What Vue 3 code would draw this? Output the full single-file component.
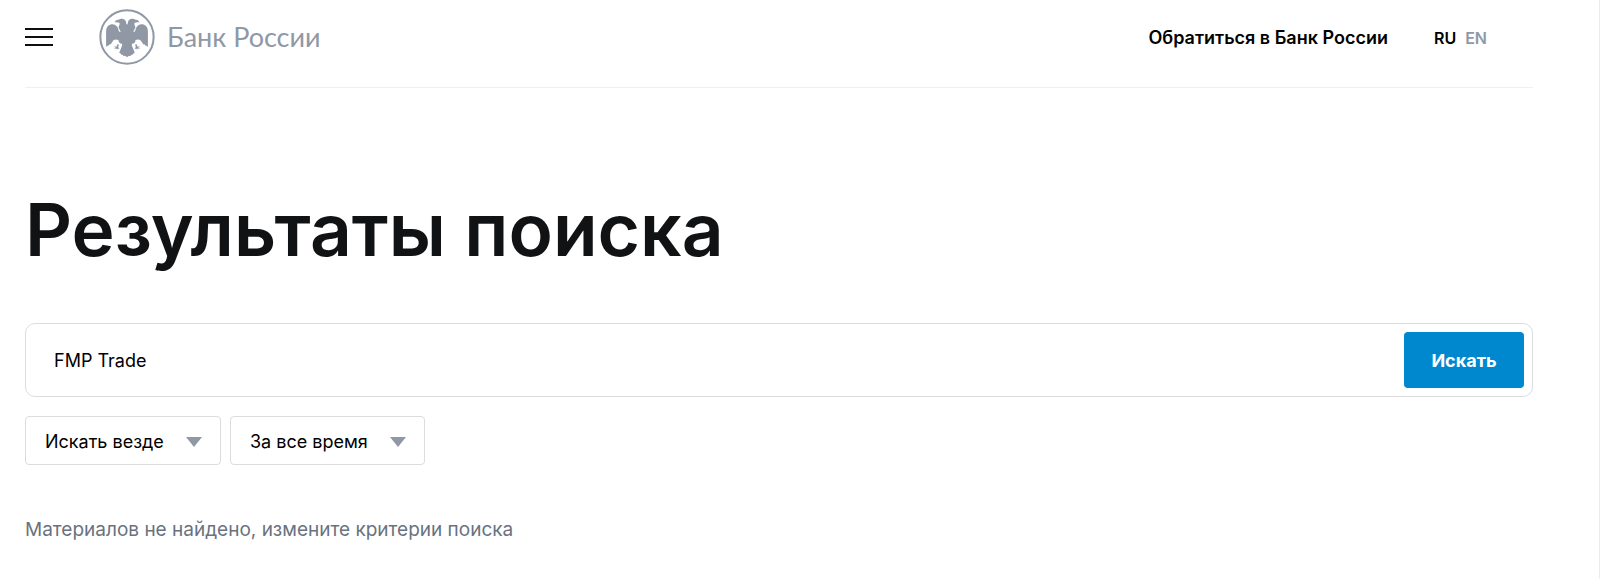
<template>
  <div class="page">
    <header class="header">
      <button class="menu-btn" type="button" aria-label="Меню">
        <span></span><span></span><span></span>
      </button>
      <a class="logo" href="#">
        <svg class="logo-mark" viewBox="0 0 166 166" aria-hidden="true">
          <circle cx="83" cy="83" r="79" fill="none" stroke="currentColor" stroke-width="6" />
          <g id="eagle-half" fill="currentColor">
            <path d="M84 48 L81 44 C81 34 75 29 67 29 C62 29 60 31 57 32 C51 32 48 35 47 40 C52 38 56 39 60 41 C63 44 60 48 58 54 C60 60 63 63 64 68 C57 69 59 60 55 54 C50 46 42 43 34 46 C25 49 21 57 21 66 L21 112 C24 111 25 107 29 108 C31 103 34 106 36 103 C38 99 40 97 44 92 C49 89 54 90 58 92 C57 98 61 103 68 103 C70 107 67 112 65 117 L60 130 C63 133 65 131 67 136 C70 134 71 137 74 140 C77 136 79 140 84 143 Z" />
            <path d="M55 104 L59 106 L57 113 L61 119 L56 117 L53 121 L52 117 L44 118 L50 114 L42 112 L52 111 Z" />
          </g>
          <use href="#eagle-half" transform="matrix(-1 0 0 1 166 0)" />
        </svg>
        <span class="logo-text">Банк России</span>
      </a>
      <a class="contact" href="#">Обратиться в Банк России</a>
      <nav class="langs" aria-label="Язык">
        <a v-for="l in langs" :key="l" href="#" :class="['lang', l === lang ? 'on' : '']" @click.prevent="lang = l">{{ l }}</a>
      </nav>
    </header>

    <main>
      <h1 class="title">Результаты поиска</h1>

      <form @submit.prevent>
        <div class="search">
          <input v-model="query" class="search-input" type="text" aria-label="Поисковый запрос" />
          <button class="search-btn" type="submit">Искать</button>
        </div>
        <div class="filters">
          <div v-for="f in filters" :key="f.label" class="filter">
            <select v-model="f.value" :aria-label="f.label">
              <option v-for="o in f.options" :key="o">{{ o }}</option>
            </select>
            <svg class="arrow" width="16" height="10" viewBox="0 0 16 10" aria-hidden="true"><path d="M0 0h16L8 10z" fill="currentColor" /></svg>
          </div>
        </div>
      </form>

      <p class="empty">Материалов не найдено, измените критерии поиска</p>
    </main>
  </div>
</template>

<script setup>
import { ref, reactive } from 'vue'

const langs = ['RU', 'EN']
const lang = ref('RU')
const query = ref('FMP Trade')

const filters = reactive([
  { label: 'Где искать', value: 'Искать везде', options: ['Искать везде'] },
  { label: 'Период', value: 'За все время', options: ['За все время'] }
])
</script>

<style>
body { background: #fff; }
</style>

<style scoped>
.page {
  box-sizing: border-box; min-height: 100vh;
  padding: 0 66px 32px 25px;
  border-right: 1px solid #ececec;
  font-family: Inter, "Noto Sans", sans-serif;
  font-size: 18px; line-height: 24px; color: #000;
}
a { color: inherit; text-decoration: none; }

.header {
  display: flex; align-items: center;
  padding: 9px 46px 22px 0;
  border-bottom: 1px solid #f0f0f0;
}
.menu-btn {
  display: flex; flex-direction: column; gap: 6px;
  width: 28px; padding: 0; margin-right: 46px;
  background: none; border: none; cursor: pointer;
}
.menu-btn span { height: 2px; background: #0e0f11; }

.logo { display: flex; align-items: center; gap: 12px; color: #9098a6; }
.logo-mark { width: 56px; height: 56px; }
.logo-text { font-family: Lato, sans-serif; font-size: 27px; line-height: 32px; }

.contact { margin-left: auto; padding-top: 2px; font-weight: 600; }
.langs { display: flex; gap: 9px; margin-left: 46px; padding-top: 2px; font-size: 16px; font-weight: 600; }
.lang { color: #9098a6; }
.lang.on { color: #000; }

.title {
  margin: 97px 0 48px;
  font-size: 73px; line-height: 90px; font-weight: 600;
  color: #101214;
}

.search {
  display: flex; align-items: stretch;
  padding: 8px; border: 1px solid #dcdcde; border-radius: 10px;
}
.search-input {
  flex: 1; min-width: 0; padding: 2px 20px 0;
  border: none; outline: none; background: transparent;
  font: inherit; color: inherit;
}
.search-btn {
  width: 120px; height: 56px; padding: 2px 0 0;
  border: none; border-radius: 4px;
  background: #0088cf; color: #fff;
  font: inherit; font-weight: 700; cursor: pointer;
}

.filters { display: flex; gap: 9px; margin-top: 19px; }
.filter { display: grid; align-items: center; }
.filter select {
  grid-area: 1 / 1; appearance: none;
  height: 49px; padding: 2px 56px 0 19px;
  border: 1px solid #dcdcde; border-radius: 4px;
  background: #fff; font: inherit; color: inherit; cursor: pointer;
}
.arrow {
  grid-area: 1 / 1; justify-self: end;
  margin: 2px 19px 0 0; color: #9098a6; pointer-events: none;
}

.empty { margin: 53px 0 0; font-size: 19px; color: #69727e; }
</style>
